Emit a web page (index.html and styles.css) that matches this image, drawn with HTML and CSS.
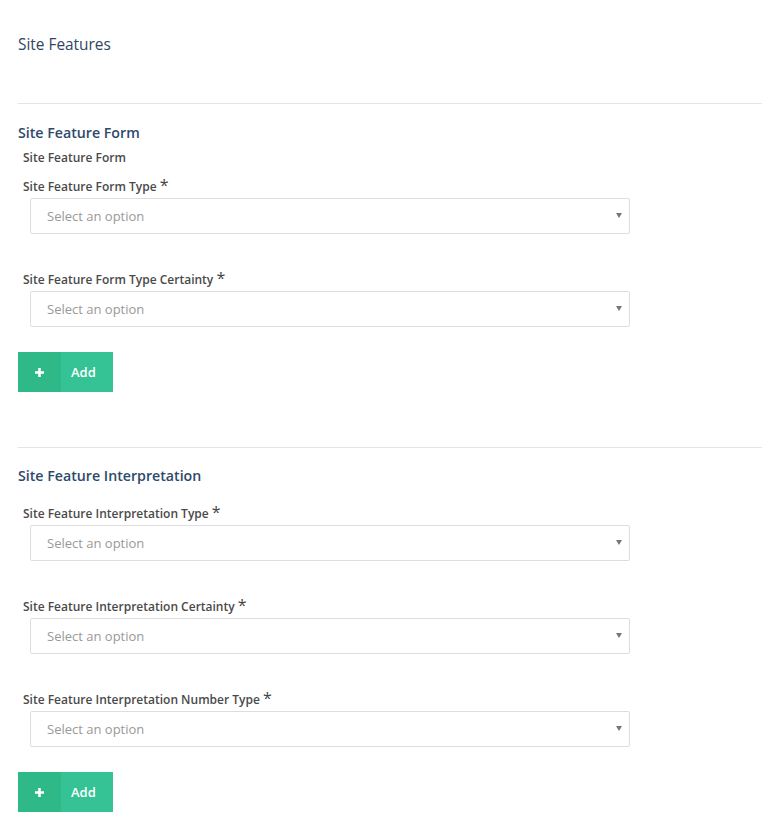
FILE: index.html
```html
<!DOCTYPE html>
<html>
<head>
<meta charset="utf-8">
<link rel="stylesheet" href="styles.css">
</head>
<body>
<div class="page">
  <h1 class="title">Site Features</h1>
  <hr class="rule">
  <section class="section">
    <h2 class="heading">Site Feature Form</h2>
    <div class="sublabel">Site Feature Form</div>
    <div class="fields">
      <div class="field">
        <label class="label">Site Feature Form Type <span class="req">*</span></label>
        <div class="select"><span class="placeholder">Select an option</span><span class="arrow"></span></div>
      </div>
      <div class="field">
        <label class="label">Site Feature Form Type Certainty <span class="req">*</span></label>
        <div class="select"><span class="placeholder">Select an option</span><span class="arrow"></span></div>
      </div>
    </div>
    <button class="add-btn"><span class="add-icon"><svg width="9" height="9" viewBox="0 0 9 9"><path d="M3.2 0h2.6v3.2H9v2.6H5.8V9H3.2V5.8H0V3.2h3.2z" fill="#fff"/></svg></span><span class="add-text">Add</span></button>
  </section>
  <hr class="rule rule2">
  <section class="section">
    <h2 class="heading heading2">Site Feature Interpretation</h2>
    <div class="fields">
      <div class="field">
        <label class="label">Site Feature Interpretation Type <span class="req">*</span></label>
        <div class="select"><span class="placeholder">Select an option</span><span class="arrow"></span></div>
      </div>
      <div class="field">
        <label class="label">Site Feature Interpretation Certainty <span class="req">*</span></label>
        <div class="select"><span class="placeholder">Select an option</span><span class="arrow"></span></div>
      </div>
      <div class="field">
        <label class="label">Site Feature Interpretation Number Type <span class="req">*</span></label>
        <div class="select"><span class="placeholder">Select an option</span><span class="arrow"></span></div>
      </div>
    </div>
    <button class="add-btn"><span class="add-icon"><svg width="9" height="9" viewBox="0 0 9 9"><path d="M3.2 0h2.6v3.2H9v2.6H5.8V9H3.2V5.8H0V3.2h3.2z" fill="#fff"/></svg></span><span class="add-text">Add</span></button>
  </section>
</div>
</body>
</html>
```
FILE: styles.css
```css
html, body {
  margin: 0;
  padding: 0;
  background: #fff;
}
body {
  font-family: "Open Sans", "Liberation Sans", sans-serif;
  color: #333;
}
.page {
  padding: 35px 0 0 18px;
  width: 744px;
}
.title {
  margin: 0;
  font-size: 15.4px;
  line-height: 20px;
  font-weight: 400;
  color: #2f4665;
}
.rule {
  margin: 48px 0 0 0;
  border: 0;
  border-top: 1px solid #e4e4e4;
  height: 0;
}
.rule2 {
  margin-top: 55px;
}
.heading {
  margin: 19px 0 0 0;
  font-size: 14.2px;
  line-height: 20px;
  font-weight: 600;
  color: #2d4a6b;
}
.heading2 {
  margin-top: 18px;
}
.sublabel {
  margin: 6px 0 0 5px;
  font-size: 12px;
  line-height: 18px;
  font-weight: 600;
  color: #4a4a4a;
}
.fields {
  margin-top: 11px;
}
.heading2 + .fields {
  margin-top: 19px;
}
.field + .field {
  margin-top: 37px;
}
.label {
  display: block;
  margin: 0 0 2px 5px;
  font-size: 12px;
  line-height: 18px;
  font-weight: 600;
  color: #4a4a4a;
}
.req {
  font-size: 16px;
  font-weight: 400;
  line-height: 10px;
  color: #444;
}
.select {
  box-sizing: border-box;
  margin-left: 12px;
  width: 600px;
  height: 36px;
  border: 1px solid #dedede;
  border-radius: 2px;
  display: flex;
  align-items: center;
  justify-content: space-between;
  padding: 0 7px 0 16px;
}
.placeholder {
  font-size: 13px;
  color: #999;
}
.arrow {
  width: 0;
  height: 0;
  border-top: 5px solid #777;
  border-left: 3px solid transparent;
  border-right: 3px solid transparent;
  margin-top: -2px;
}
.add-btn {
  margin-top: 25px;
  display: flex;
  align-items: stretch;
  height: 40px;
  width: 95px;
  padding: 0;
  border: 0;
  border-radius: 0;
  background: #35c294;
  cursor: pointer;
  font-family: inherit;
}
.add-icon {
  width: 43px;
  background: #2fb888;
  display: flex;
  align-items: center;
  justify-content: center;
}
.add-text {
  flex: 1;
  display: flex;
  align-items: center;
  padding-left: 10px;
  color: #fff;
  font-size: 13px;
  font-weight: 600;
}
```
